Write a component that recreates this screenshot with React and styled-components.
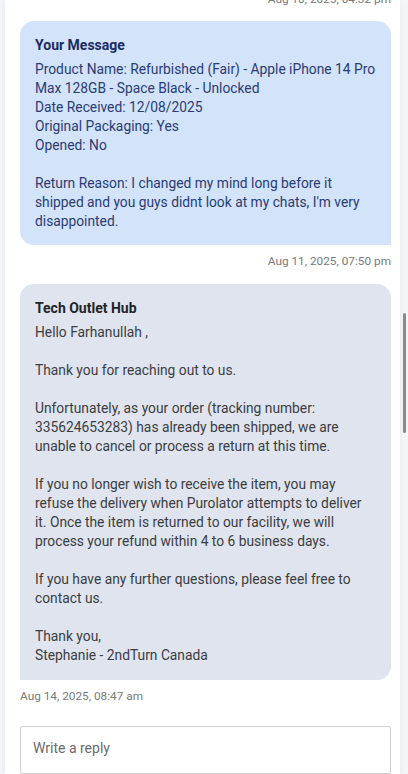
import React from "react";
import styled, { createGlobalStyle } from "styled-components";

const GlobalStyle = createGlobalStyle`
  html, body {
    margin: 0;
    padding: 0;
    background: #f4f5f8;
    font-family: Roboto, "Noto Sans", "Liberation Sans", sans-serif;
    overflow: hidden;
  }
`;

const Screen = styled.div`
  display: flex;
  height: 774px;
  overflow: hidden;
`;

const Panel = styled.div`
  width: 395px;
  margin-left: 5px;
  background: #ffffff;
  box-shadow: 0 0 6px rgba(0, 0, 0, 0.06);
  padding: 0 9px 0 15px;
  box-sizing: border-box;
  display: flex;
  flex-direction: column;
`;

const ScrollTrack = styled.div`
  width: 8px;
  display: flex;
  justify-content: center;
`;

const ScrollThumb = styled.div`
  width: 3px;
  height: 120px;
  margin-top: 313px;
  background: #8a8a8a;
  border-radius: 2px;
`;

const Stamp = styled.div`
  font-size: 11.8px;
  line-height: 16px;
  color: #7a7a7a;
  text-align: ${(p) => (p.$right ? "right" : "left")};
  margin: ${(p) => p.$margin};
`;

const Bubble = styled.div`
  padding: 15px 15px ${(p) => (p.$mine ? "14px" : "15px")};
  border-radius: ${(p) => (p.$mine ? "14px 14px 0 14px" : "14px 14px 14px 0")};
  background: ${(p) => (p.$mine ? "#d3e3fa" : "#dfe4ee")};
  color: ${(p) => (p.$mine ? "#2a3c74" : "#3b3d42")};
  font-size: 13.8px;
  line-height: 19px;
  white-space: nowrap;
`;

const BubbleTitle = styled.div`
  font-weight: 700;
  font-size: 14px;
  margin-bottom: 5px;
  color: ${(p) => (p.$mine ? "#1b2b63" : "#222428")};
`;

const Line = styled.div`
  min-height: 19px;
`;

const ReplyBox = styled.div`
  border: 1px solid #cfcfcf;
  border-radius: 2px;
  padding: 12px 12px;
  height: 80px;
  box-sizing: border-box;
  font-size: 14px;
  line-height: 19px;
  color: #6b6b6b;
`;

const mine = [
  "Product Name: Refurbished (Fair) - Apple iPhone 14 Pro",
  "Max 128GB - Space Black - Unlocked",
  "Date Received: 12/08/2025",
  "Original Packaging: Yes",
  "Opened: No",
  "",
  "Return Reason: I changed my mind long before it",
  "shipped and you guys didnt look at my chats, I'm very",
  "disappointed.",
];

const theirs = [
  "Hello Farhanullah ,",
  "",
  "Thank you for reaching out to us.",
  "",
  "Unfortunately, as your order (tracking number:",
  "335624653283) has already been shipped, we are",
  "unable to cancel or process a return at this time.",
  "",
  "If you no longer wish to receive the item, you may",
  "refuse the delivery when Purolator attempts to deliver",
  "it. Once the item is returned to our facility, we will",
  "process your refund within 4 to 6 business days.",
  "",
  "If you have any further questions, please feel free to",
  "contact us.",
  "",
  "Thank you,",
  "Stephanie - 2ndTurn Canada",
];

export default function App() {
  return (
    <>
      <GlobalStyle />
      <Screen>
        <Panel>
          <Stamp $right $margin="-9px 0 14px">Aug 10, 2025, 04:32 pm</Stamp>
          <Bubble $mine>
            <BubbleTitle $mine>Your Message</BubbleTitle>
            {mine.map((t, i) => (
              <Line key={i}>{t}</Line>
            ))}
          </Bubble>
          <Stamp $right $margin="8px 0 15px">Aug 11, 2025, 07:50 pm</Stamp>
          <Bubble>
            <BubbleTitle>Tech Outlet Hub</BubbleTitle>
            {theirs.map((t, i) => (
              <Line key={i}>{t}</Line>
            ))}
          </Bubble>
          <Stamp $margin="8px 0 22px">Aug 14, 2025, 08:47 am</Stamp>
          <ReplyBox>Write a reply</ReplyBox>
        </Panel>
        <ScrollTrack>
          <ScrollThumb />
        </ScrollTrack>
      </Screen>
    </>
  );
}
